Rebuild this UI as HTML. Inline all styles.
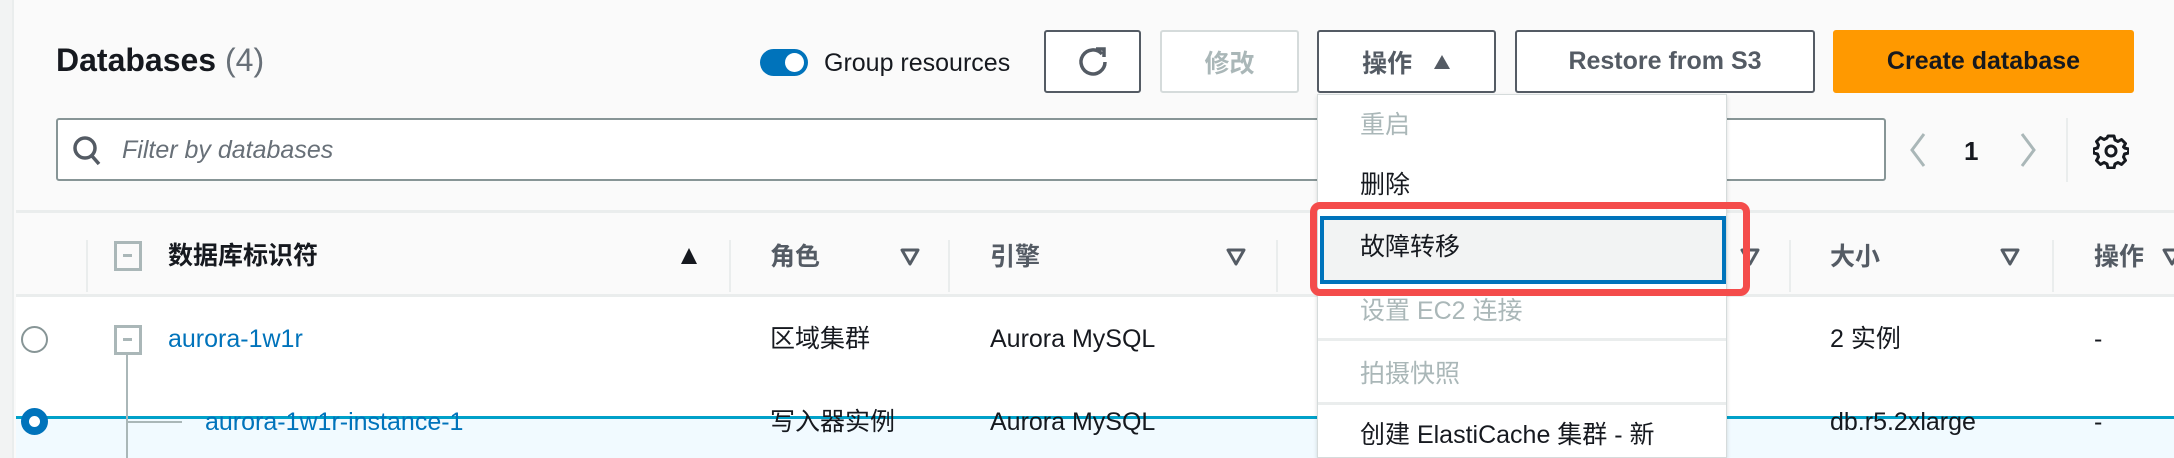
<!DOCTYPE html>
<html><head><meta charset="utf-8"><style>
*{box-sizing:border-box;margin:0;padding:0}
body{width:2174px;height:458px;overflow:hidden;background:#fafafa;font-family:"Liberation Sans","Noto Sans CJK SC",sans-serif;color:#16191f;position:relative}
.a{position:absolute}
.btn{position:absolute;top:30px;height:63px;border:2px solid #545b64;border-radius:3px;background:#fff;font-weight:bold;font-size:25px;display:flex;align-items:center;justify-content:center;color:#545b64}
.h{font-size:25px;font-weight:bold;color:#16191f;line-height:30px}
.div{position:absolute;top:240px;width:2px;height:52px;background:#eaeded}
.tri{position:absolute}
.t{font-size:25px;position:absolute;line-height:30px}
.lnk{color:#0073bb}
.mi{position:absolute;left:1360px;font-size:25px;line-height:30px}
</style></head><body>
<div class="a" style="left:0;top:0;width:14px;height:458px;background:#f2f3f3;border-right:2px solid #eaeded"></div>
<div class="a" style="left:56px;top:42px;font-size:32px;line-height:36px;font-weight:bold">Databases <span style="font-weight:normal;color:#687078">(4)</span></div>
<div class="a" style="left:760px;top:49px;width:48px;height:27px;border-radius:14px;background:#0073bb"><div class="a" style="right:4px;top:4px;width:19px;height:19px;border-radius:50%;background:#fff"></div></div>
<div class="a" style="left:824px;top:48px;font-size:25px;line-height:30px">Group resources</div>
<div class="btn" style="left:1044px;width:97px"><svg width="34" height="34" viewBox="0 0 34 34"><path d="M26 9 A12 12 0 1 0 29 17" fill="none" stroke="#545b64" stroke-width="3.5"/><path d="M20 4 L28 4 L28 12" fill="none" stroke="#545b64" stroke-width="3.5"/></svg></div>
<div class="btn" style="left:1160px;width:139px;border-color:#d5dbdb;color:#aab7b8">修改</div>
<div class="btn" style="left:1317px;width:179px">操作&nbsp;&nbsp;&nbsp;<svg width="18" height="16"><path d="M9 1 L17 15 L1 15Z" fill="#545b64"/></svg></div>
<div class="btn" style="left:1515px;width:300px">Restore from S3</div>
<div class="btn" style="left:1833px;width:301px;background:#ff9900;border-color:#ff9900;color:#16191f">Create database</div>
<div class="a" style="left:56px;top:118px;width:1830px;height:63px;border:2px solid #879596;border-radius:3px;background:#fff"></div>
<svg class="a" style="left:72px;top:135px" width="30" height="32" viewBox="0 0 30 32"><circle cx="13" cy="13" r="10" fill="none" stroke="#545b64" stroke-width="3.5"/><path d="M20 21 L27 29" stroke="#545b64" stroke-width="3.5"/></svg>
<div class="a" style="left:122px;top:135px;font-size:25px;line-height:30px;font-style:italic;color:#687078">Filter by databases</div>
<svg class="a" style="left:1908px;top:132px" width="20" height="36"><path d="M16 2 L4 18 L16 34" fill="none" stroke="#aab7b8" stroke-width="3"/></svg>
<div class="a" style="left:1964px;top:136px;font-size:26px;line-height:30px;font-weight:bold">1</div>
<svg class="a" style="left:2018px;top:132px" width="20" height="36"><path d="M4 2 L16 18 L4 34" fill="none" stroke="#aab7b8" stroke-width="3"/></svg>
<div class="a" style="left:2066px;top:118px;width:2px;height:64px;background:#eaeded"></div>
<svg class="a" style="left:2093px;top:133px" width="36" height="36" viewBox="0 0 36 36"><path d="M15 3h6l1 4 3 1.5 3.5-2 4 4-2 3.5L31.5 15l4 1v4l-4 1-1 3 2 3.5-4 4-3.5-2-3 1.5-1 4h-6l-1-4-3-1.5-3.5 2-4-4 2-3.5L4.5 21l-4-1v-4l4-1 1-3-2-3.5 4-4 3.5 2 3-1.5z" fill="none" stroke="#16191f" stroke-width="3" stroke-linejoin="round"/><circle cx="18" cy="18" r="5" fill="none" stroke="#16191f" stroke-width="3"/></svg>
<!-- table -->
<div class="a" style="left:16px;top:210px;width:2158px;height:3px;background:#eaeded"></div>
<div class="a" style="left:16px;top:294px;width:2158px;height:3px;background:#eaeded"></div>
<div class="a" style="left:16px;top:297px;width:2158px;height:121px;background:#fff"></div>
<div class="a" style="left:16px;top:416px;width:2158px;height:3px;background:#00a1c9"></div>
<div class="a" style="left:16px;top:419px;width:2158px;height:39px;background:#f1faff"></div>
<div class="div" style="left:86px"></div><div class="div" style="left:729px"></div><div class="div" style="left:948px"></div><div class="div" style="left:1276px"></div><div class="div" style="left:1789px"></div><div class="div" style="left:2052px"></div>
<div class="a" style="left:114px;top:241px;width:28px;height:30px;border:3px solid #aab7b8"><div class="a" style="left:6px;top:10px;width:9px;height:3px;background:#aab7b8"></div></div>
<div class="h a" style="left:168px;top:241px">数据库标识符</div>
<svg class="tri" style="left:680px;top:247px" width="18" height="18"><path d="M9 1 L17 17 L1 17Z" fill="#16191f"/></svg>
<div class="h a" style="left:770px;top:242px;color:#545b64">角色</div>
<svg class="tri" style="left:900px;top:248px" width="20" height="18"><path d="M2 2 L18 2 L10 16Z" fill="none" stroke="#545b64" stroke-width="3" stroke-linejoin="round"/></svg>
<div class="h a" style="left:990px;top:242px;color:#545b64">引擎</div>
<svg class="tri" style="left:1226px;top:248px" width="20" height="18"><path d="M2 2 L18 2 L10 16Z" fill="none" stroke="#545b64" stroke-width="3" stroke-linejoin="round"/></svg>
<svg class="tri" style="left:1740px;top:248px" width="20" height="18"><path d="M2 2 L18 2 L10 16Z" fill="none" stroke="#545b64" stroke-width="3" stroke-linejoin="round"/></svg>
<div class="h a" style="left:1830px;top:242px;color:#545b64">大小</div>
<svg class="tri" style="left:2000px;top:248px" width="20" height="18"><path d="M2 2 L18 2 L10 16Z" fill="none" stroke="#545b64" stroke-width="3" stroke-linejoin="round"/></svg>
<div class="h a" style="left:2094px;top:242px;color:#545b64">操作</div>
<svg class="tri" style="left:2162px;top:248px" width="20" height="18"><path d="M2 2 L18 2 L10 16Z" fill="none" stroke="#545b64" stroke-width="3" stroke-linejoin="round"/></svg>
<div class="a" style="left:21px;top:326px;width:27px;height:27px;border-radius:50%;border:2px solid #879596;background:#fff"></div>
<div class="a" style="left:21px;top:408px;width:27px;height:27px;border-radius:50%;border:8px solid #0073bb;background:#fff"></div>
<div class="a" style="left:114px;top:325px;width:28px;height:30px;border:3px solid #aab7b8;background:#fff"><div class="a" style="left:6px;top:10px;width:9px;height:3px;background:#aab7b8"></div></div>
<div class="a" style="left:126px;top:355px;width:2px;height:103px;background:#aab7b8"></div>
<div class="a" style="left:128px;top:421px;width:54px;height:2px;background:#aab7b8"></div>
<div class="t lnk" style="left:168px;top:324px">aurora-1w1r</div>
<div class="t lnk" style="left:205px;top:407px">aurora-1w1r-instance-1</div>
<div class="t" style="left:770px;top:324px">区域集群</div><div class="t" style="left:770px;top:407px">写入器实例</div>
<div class="t" style="left:990px;top:324px">Aurora MySQL</div><div class="t" style="left:990px;top:407px">Aurora MySQL</div>
<div class="t" style="left:1830px;top:324px">2 实例</div><div class="t" style="left:1830px;top:407px">db.r5.2xlarge</div>
<div class="t" style="left:2094px;top:324px">-</div><div class="t" style="left:2094px;top:407px">-</div>
<!-- dropdown -->
<div class="a" style="left:1317px;top:94px;width:410px;height:364px;background:#fff;border:1px solid #d5dbdb;box-shadow:0 2px 4px rgba(0,0,0,.15)"></div>
<div class="mi" style="top:110px;color:#aab7b8">重启</div>
<div class="mi" style="top:170px">删除</div>
<div class="a" style="left:1320px;top:216px;width:406px;height:68px;background:#f2f3f3;border:4px solid #0073bb"></div>
<div class="mi" style="top:232px">故障转移</div>
<div class="mi" style="top:296px;color:#aab7b8">设置 EC2 连接</div>
<div class="a" style="left:1318px;top:338px;width:408px;height:3px;background:#eaeded"></div>
<div class="mi" style="top:359px;color:#aab7b8">拍摄快照</div>
<div class="a" style="left:1318px;top:402px;width:408px;height:3px;background:#eaeded"></div>
<div class="mi" style="top:420px">创建 ElastiCache 集群 - 新</div>
<div class="a" style="left:1310px;top:202px;width:440px;height:94px;border:7px solid #f44c4b;border-radius:10px"></div>
</body></html>
